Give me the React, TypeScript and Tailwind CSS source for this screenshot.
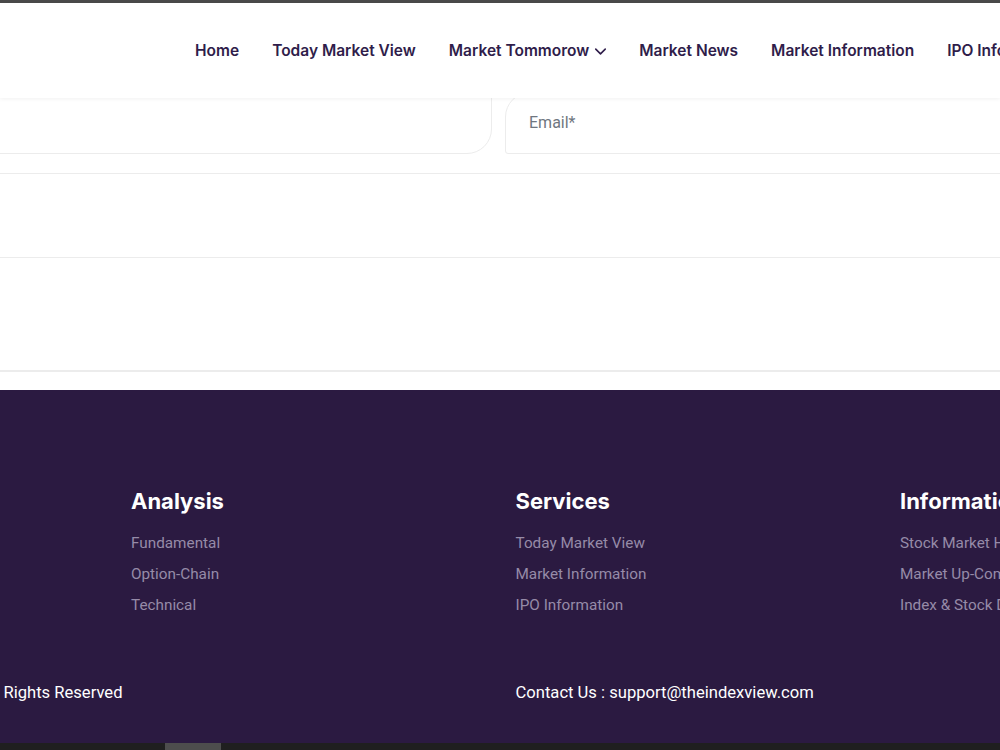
import { ChevronDown } from 'lucide-react'

const navItems = ['Home', 'Today Market View', 'Market Tommorow', 'Market News', 'Market Information', 'IPO Information']

const footerColumns = [
	{ title: 'Analysis', links: ['Fundamental', 'Option-Chain', 'Technical'] },
	{ title: 'Services', links: ['Today Market View', 'Market Information', 'IPO Information'] },
	{ title: 'Information', links: ['Stock Market Holidays', 'Market Up-Coming Events', 'Index & Stock Details'] },
]

export default function App() {
	return (
		<div className="flex h-[750px] w-[1000px] flex-col overflow-hidden bg-white font-['Roboto',sans-serif]">
			{/* Top edge */}
			<div className="h-[3px] shrink-0 bg-[#4a4a4a]" />

			{/* Header */}
			<header className="relative z-10 flex h-[95px] shrink-0 items-center whitespace-nowrap bg-white pl-[195px] pt-[1px] shadow-[0_1px_4px_rgba(0,0,0,0.06)]">
				<nav className="flex items-center gap-[33px] text-[15.5px] font-semibold text-[#2f1d4a] font-['Inter',sans-serif]">
					{navItems.map((item) => (
						<a key={item} className="flex items-center gap-[5px]">
							{item}
							{item === 'Market Tommorow' && <ChevronDown size={19} strokeWidth={2} className="-mx-[3.5px] mt-[1px]" />}
						</a>
					))}
				</nav>
			</header>

			{/* Form */}
			<main className="flex h-[292px] shrink-0 flex-col">
				<div className="-mt-[6px] flex h-[62px] shrink-0 gap-[13px]">
					<div className="-ml-[30px] w-[522px] shrink-0 rounded-br-[25px] border border-[#ececec] bg-white" />
					<div className="flex w-[560px] shrink-0 items-center rounded-tl-[25px] rounded-bl-[3px] border border-[#ececec] bg-white pl-[23px] pb-[1px] text-[16px] text-[#6f7680]">
						Email*
					</div>
				</div>
				<div className="mt-[19px] h-[84px] shrink-0 border-t border-[#ececec]" />
				<div className="h-[113px] shrink-0 border-t border-[#ececec]" />
				<div className="h-[2px] shrink-0 bg-[#ececec]" />
			</main>

			{/* Footer */}
			<footer className="flex min-h-0 flex-1 flex-col whitespace-nowrap bg-[#2b1a41] pt-[97px]">
				<div className="flex pl-[131px]">
					{footerColumns.map((column) => (
						<div key={column.title} className="w-[384.5px] shrink-0">
							<h4 className="mb-[15.5px] text-[22px] leading-[28px] font-bold text-white font-['Inter',sans-serif]">{column.title}</h4>
							<ul className="flex flex-col gap-[7px] text-[15.3px] text-[#968ba8]">
								{column.links.map((link) => (
									<li key={link} className="leading-[24px]">
										{link}
									</li>
								))}
							</ul>
						</div>
					))}
				</div>
				<div className="mt-[64.5px] flex text-[16.6px] leading-[24px] text-white">
					<div className="flex w-[515.5px] shrink-0 justify-end pr-[393px]">
						<span className="shrink-0">All Rights Reserved</span>
					</div>
					<div>Contact Us : support@theindexview.com</div>
				</div>
			</footer>

			{/* Horizontal scrollbar */}
			<div className="h-[7px] shrink-0 bg-[#1f1f1f] pl-[165px]">
				<div className="h-full w-[56px] bg-[#4d4d4d]" />
			</div>
		</div>
	)
}
